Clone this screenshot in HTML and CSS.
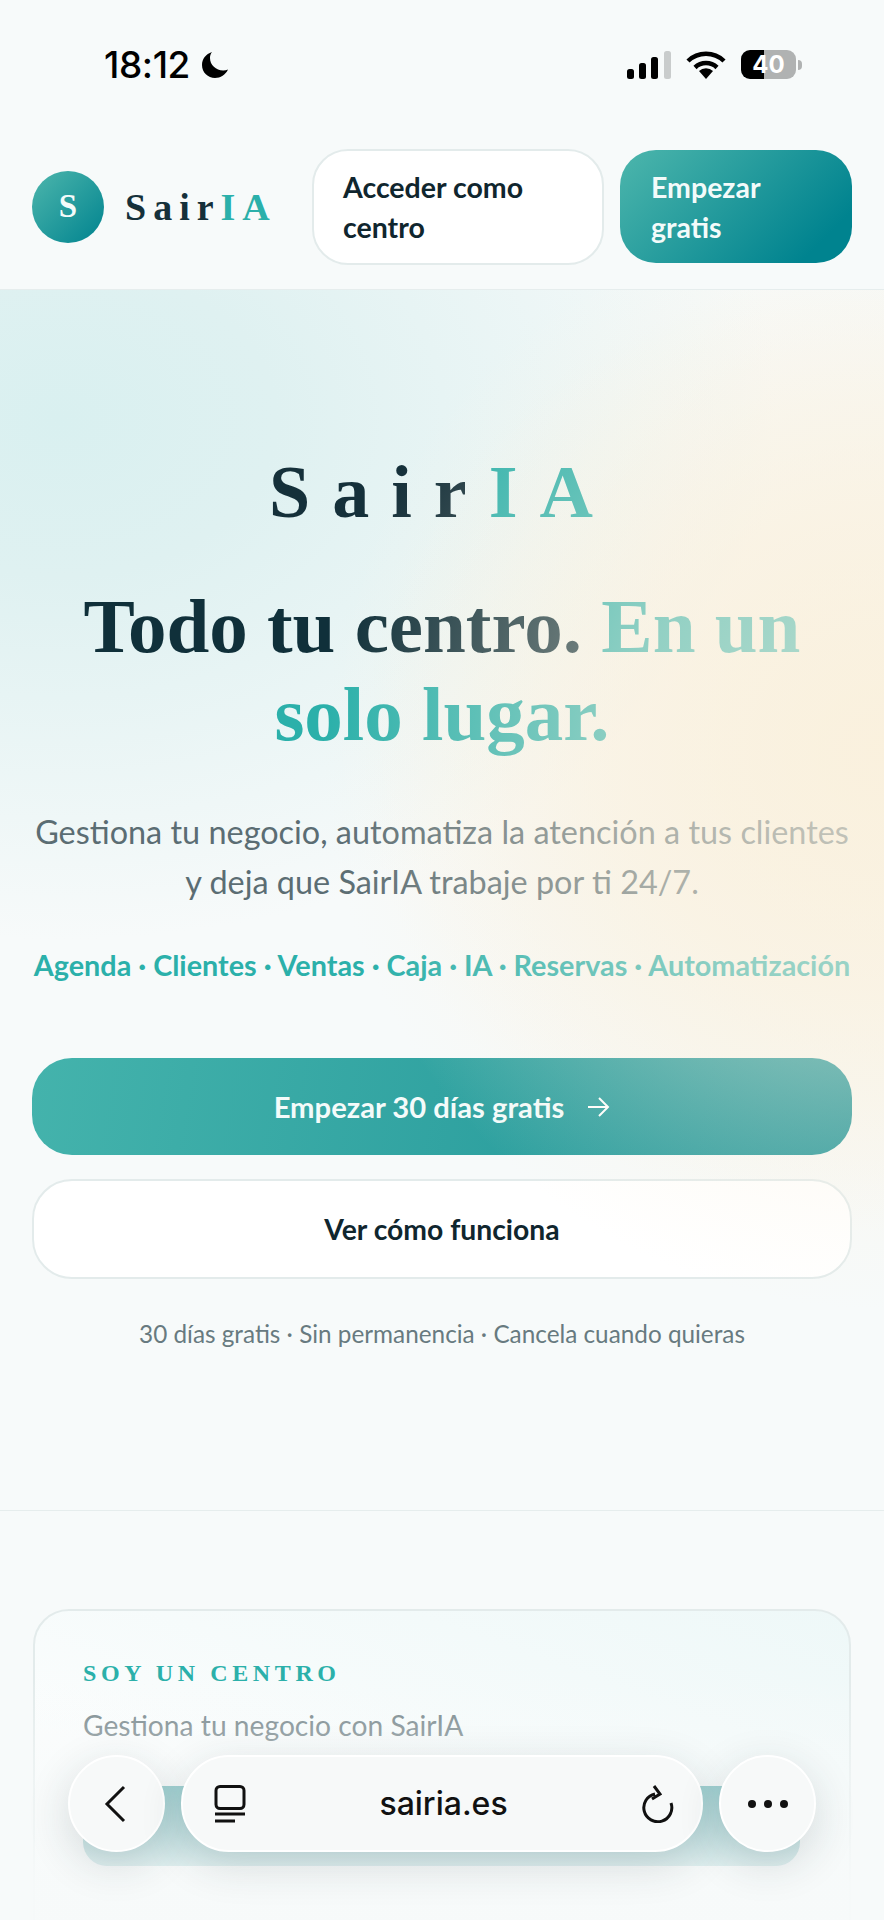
FILE: index.html
```html
<!DOCTYPE html>
<html lang="es">
<head>
  <meta charset="UTF-8">
  <meta name="viewport" content="width=device-width, initial-scale=1">
  <title>SairIA</title>
  <link rel="stylesheet" href="styles.css">
</head>
<body>
  <div class="page">
    <div class="status">
      <div class="status-left">
        <span class="time">18:12</span>
        <svg class="moon" viewBox="0 0 28 28"><path d="M11 1C4.800 3 1 8 1 14c0 7.500 6 13 13 13 5.500 0 10.500-3.200 13-8.500-1.500.6-3 .9-4.800.9C15 19.400 9 14 9 7c0-2.200.7-4.300 2-6z" fill="#000"/></svg>
      </div>
      <div class="status-right">
        <svg class="signal" viewBox="0 0 44 28">
          <rect x="0" y="18" width="7" height="10" rx="2.500" fill="#000"/>
          <rect x="12" y="12" width="7" height="16" rx="2.500" fill="#000"/>
          <rect x="24" y="6" width="7" height="22" rx="2.500" fill="#000"/>
          <rect x="37" y="0" width="7" height="28" rx="2.500" fill="#c9cccc"/>
        </svg>
        <svg class="wifi" viewBox="0 0 40 28">
          <path d="M2 10a26 26 0 0 1 36 0" fill="none" stroke="#000" stroke-width="4.500"/>
          <path d="M9 16.500a16 16 0 0 1 22 0" fill="none" stroke="#000" stroke-width="4.500"/>
          <path d="M13 20a10 10 0 0 1 14 0l-7 8z" fill="#000"/>
        </svg>
        <div class="battery"><span class="battery-level">40</span></div>
        <span class="battery-nub"></span>
      </div>
    </div>

    <header class="nav">
      <div class="nav-logo">
        <span class="logo-circle">S</span>
        <span class="logo-text">Sair<em>IA</em></span>
      </div>
      <a class="nav-btn nav-login">Acceder como centro</a>
      <a class="nav-btn nav-start">Empezar gratis</a>
    </header>

    <section class="hero">
      <div class="wordmark">Sair<em>IA</em></div>
      <h1><span>Todo tu centro.</span> <em>En un</em> <em>solo lugar.</em></h1>
      <p class="lead">Gestiona tu negocio, automatiza la atención a tus clientes y deja que SairIA trabaje por ti 24/7.</p>
      <p class="tags">Agenda · Clientes · Ventas · Caja · IA · Reservas · Automatización</p>
      <a class="cta cta-main">Empezar 30 días gratis
        <svg viewBox="0 0 24 24"><path d="M2 12h20M13 3l9 9-9 9" fill="none" stroke="#fff" stroke-width="2"/></svg>
      </a>
      <a class="cta cta-second">Ver cómo funciona</a>
      <p class="note">30 días gratis · Sin permanencia · Cancela cuando quieras</p>
    </section>

    <section class="cards">
      <div class="card">
        <div class="card-label">SOY UN CENTRO</div>
        <p class="card-text">Gestiona tu negocio con SairIA</p>
        <a class="card-btn"></a>
      </div>
    </section>

    <div class="fade"></div>

    <div class="toolbar">
      <div class="glass round">
        <svg class="ico-back" viewBox="0 0 22 38"><path d="M20 2L3 19l17 17" fill="none" stroke="#111" stroke-width="3"/></svg>
      </div>
      <div class="glass url">
        <svg class="ico-tabs" viewBox="0 0 32 38">
          <rect x="2" y="1.500" width="28" height="22" rx="4" fill="none" stroke="#111" stroke-width="3"/>
          <path d="M1 29h30M1 36h20" stroke="#111" stroke-width="3"/>
        </svg>
        <span class="url-text">sairia.es</span>
        <svg class="ico-reload" viewBox="0 0 34 38"><path d="M14 9A14 14 0 1 0 30 18M13 1l6 8-8 5" fill="none" stroke="#111" stroke-width="3"/></svg>
      </div>
      <div class="glass round">
        <svg class="ico-more" viewBox="0 0 40 8"><circle cx="4" cy="4" r="4" fill="#111"/><circle cx="20" cy="4" r="4" fill="#111"/><circle cx="36" cy="4" r="4" fill="#111"/></svg>
      </div>
    </div>
  </div>
</body>
</html>
```

FILE: styles.css
```css
* {
  box-sizing: border-box;
}
body {
  margin: 0;
  background: #f7fafa;
  font-family: "Lato", sans-serif;
  color: #10262e;
}
em {
  font-style: normal;
}
.page {
  position: relative;
  width: 884px;
  height: 1920px;
  overflow: hidden;
  background: #f7fafa;
}

/* status bar */
.status {
  height: 149px;
  padding: 50px 81px 0 104px;
  display: flex;
  justify-content: space-between;
  align-items: flex-start;
}
.status-left {
  display: flex;
  align-items: center;
  gap: 11px;
}
.time {
  font-family: "Inter", sans-serif;
  font-size: 37px;
  line-height: 30px;
  font-weight: 500;
  color: #000;
  letter-spacing: -0.4px;
}
.moon {
  width: 28px;
  height: 28px;
}
.status-right {
  display: flex;
  align-items: center;
  margin-right: 1px;
}
.signal {
  width: 44px;
  height: 28px;
}
.wifi {
  width: 40px;
  height: 28px;
  margin-left: 15px;
}
.battery {
  width: 55px;
  height: 29px;
  margin-left: 15px;
  border-radius: 9px;
  background: linear-gradient(90deg, #000 42%, #b0b2b2 42%);
  display: flex;
  align-items: center;
  justify-content: center;
}
.battery-level {
  font-family: "Inter", sans-serif;
  font-size: 24px;
  font-weight: 700;
  color: #fff;
}
.battery-nub {
  width: 4px;
  height: 10px;
  margin-left: 2px;
  border-radius: 0 4px 4px 0;
  background: #b0b2b2;
}

/* nav */
.nav {
  height: 141px;
  padding: 0 32px 25px;
  display: flex;
  align-items: center;
  border-bottom: 1px solid #e6eded;
}
.nav-logo {
  display: flex;
  align-items: center;
  gap: 21px;
  width: 280px;
}
.logo-circle {
  width: 72px;
  height: 72px;
  border-radius: 50%;
  background: linear-gradient(135deg, #4db6ac, #00838f);
  color: #f3fbfa;
  font-family: "Liberation Serif", serif;
  font-weight: 700;
  font-size: 33px;
  display: flex;
  align-items: center;
  justify-content: center;
}
.logo-text {
  font-family: "Liberation Serif", serif;
  font-weight: 700;
  font-size: 38px;
  letter-spacing: 7px;
  color: #15303a;
}
.logo-text em {
  color: #2bb0aa;
}
.nav-btn {
  height: 116px;
  border-radius: 36px;
  padding: 0 29px;
  display: flex;
  align-items: center;
  font-size: 28.5px;
  line-height: 40px;
  font-weight: 700;
}
.nav-login {
  width: 292px;
  background: #fff;
  border: 2px solid #e3ebeb;
}
.nav-start {
  width: 232px;
  height: 113px;
  margin-left: 16px;
  padding-left: 31px;
  background: linear-gradient(135deg, #4db6ac, #00838f 85%);
  color: #f3fbfa;
}

/* hero */
.hero {
  position: relative;
  height: 1221px;
  padding: 0 32px;
  text-align: center;
  border-bottom: 1px solid #e6eded;
  background:
    radial-gradient(ellipse 520px 480px at 100% 460px, #faf0dd 0%, rgba(250, 240, 221, 0) 100%),
    radial-gradient(ellipse 720px 520px at 60px 130px, #d9f0f0 0%, #dff1f1 30%, rgba(223, 241, 241, 0) 100%),
    #f7fafa;
}
.hero::after {
  content: "";
  position: absolute;
  inset: 0;
  pointer-events: none;
  background: radial-gradient(ellipse 560px 560px at 100% 460px, rgba(250, 241, 222, 0.72) 0%, rgba(250, 241, 222, 0.5) 45%, rgba(250, 241, 222, 0) 100%);
}
.wordmark {
  padding-top: 162px;
  font-family: "Liberation Serif", serif;
  font-weight: 700;
  font-size: 74px;
  line-height: 80px;
  letter-spacing: 22px;
  color: #15303a;
}
.wordmark em {
  color: #2bb0aa;
}
h1 {
  margin: 50px 0 0;
  font-family: "Liberation Serif", serif;
  font-weight: 700;
  font-size: 77px;
  line-height: 88px;
  color: #10303a;
}
h1 em {
  color: #2bb0aa;
}
.lead {
  margin: 49px -8px 0;
  font-size: 32.4px;
  line-height: 50px;
  color: #5b6d73;
}
.tags {
  margin: 38px -4px 0;
  font-size: 28.8px;
  line-height: 40px;
  font-weight: 700;
  white-space: nowrap;
  color: #2bb0aa;
}
.cta {
  display: flex;
  align-items: center;
  justify-content: center;
  font-size: 28.3px;
  font-weight: 700;
  border-radius: 40px;
}
.cta-main {
  height: 97px;
  margin-top: 73px;
  gap: 22px;
  font-size: 29.2px;
  background: linear-gradient(100deg, #44b3ac, #1f9497);
  color: #f4fbfa;
}
.cta-main svg {
  width: 24px;
  height: 24px;
}
.cta-second {
  height: 100px;
  margin-top: 24px;
  background: #fff;
  border: 2px solid #e3ebeb;
  color: #10262e;
}
.note {
  margin: 38px 0 0;
  font-size: 24.3px;
  line-height: 34px;
  color: #687a80;
}

/* card below the hero */
.cards {
  padding: 98px 33px 0 33px;
}
.card {
  height: 400px;
  padding: 46px 48px 0;
  border: 2px solid #e3ebeb;
  border-radius: 36px;
  background: linear-gradient(200deg, #eef8f8, #fbfdfd 60%);
}
.card-label {
  font-family: "Liberation Serif", serif;
  font-weight: 700;
  font-size: 24px;
  line-height: 32px;
  letter-spacing: 4.6px;
  color: #2bb0aa;
}
.card-text {
  margin: 19px 0 0;
  font-size: 28.2px;
  line-height: 34px;
  color: #6f7f84;
}
.card-btn {
  display: block;
  height: 80px;
  width: 717px;
  margin-top: 44px;
  border-radius: 24px;
  background: #2b9a9d;
}

/* browser bar floats over the page */
.fade {
  position: absolute;
  left: 0;
  right: 0;
  bottom: 0;
  height: 240px;
  pointer-events: none;
  background: linear-gradient(180deg, rgba(247, 250, 250, 0), rgba(247, 250, 250, 0.55) 40%, rgba(247, 250, 250, 0.95) 85%);
}
.toolbar {
  position: absolute;
  left: 68px;
  bottom: 68px;
  display: flex;
  align-items: center;
}
.glass {
  height: 97px;
  display: flex;
  align-items: center;
  background: #f7f9f9;
  border: 2px solid #fff;
  box-shadow: 0 12px 44px rgba(30, 50, 55, 0.16);
}
.round {
  width: 97px;
  border-radius: 50%;
  justify-content: center;
}
.url {
  width: 522px;
  margin: 0 16px;
  padding: 0 26px 0 31px;
  border-radius: 48px;
  justify-content: space-between;
}
.url-text {
  font-family: "Inter", sans-serif;
  font-size: 32px;
  font-weight: 500;
  color: #111;
}
.ico-back {
  width: 22px;
  height: 38px;
  margin-right: 4px;
}
.ico-tabs {
  width: 32px;
  height: 38px;
}
.ico-reload {
  width: 34px;
  height: 38px;
}
.ico-more {
  width: 40px;
  height: 8px;
}
```
